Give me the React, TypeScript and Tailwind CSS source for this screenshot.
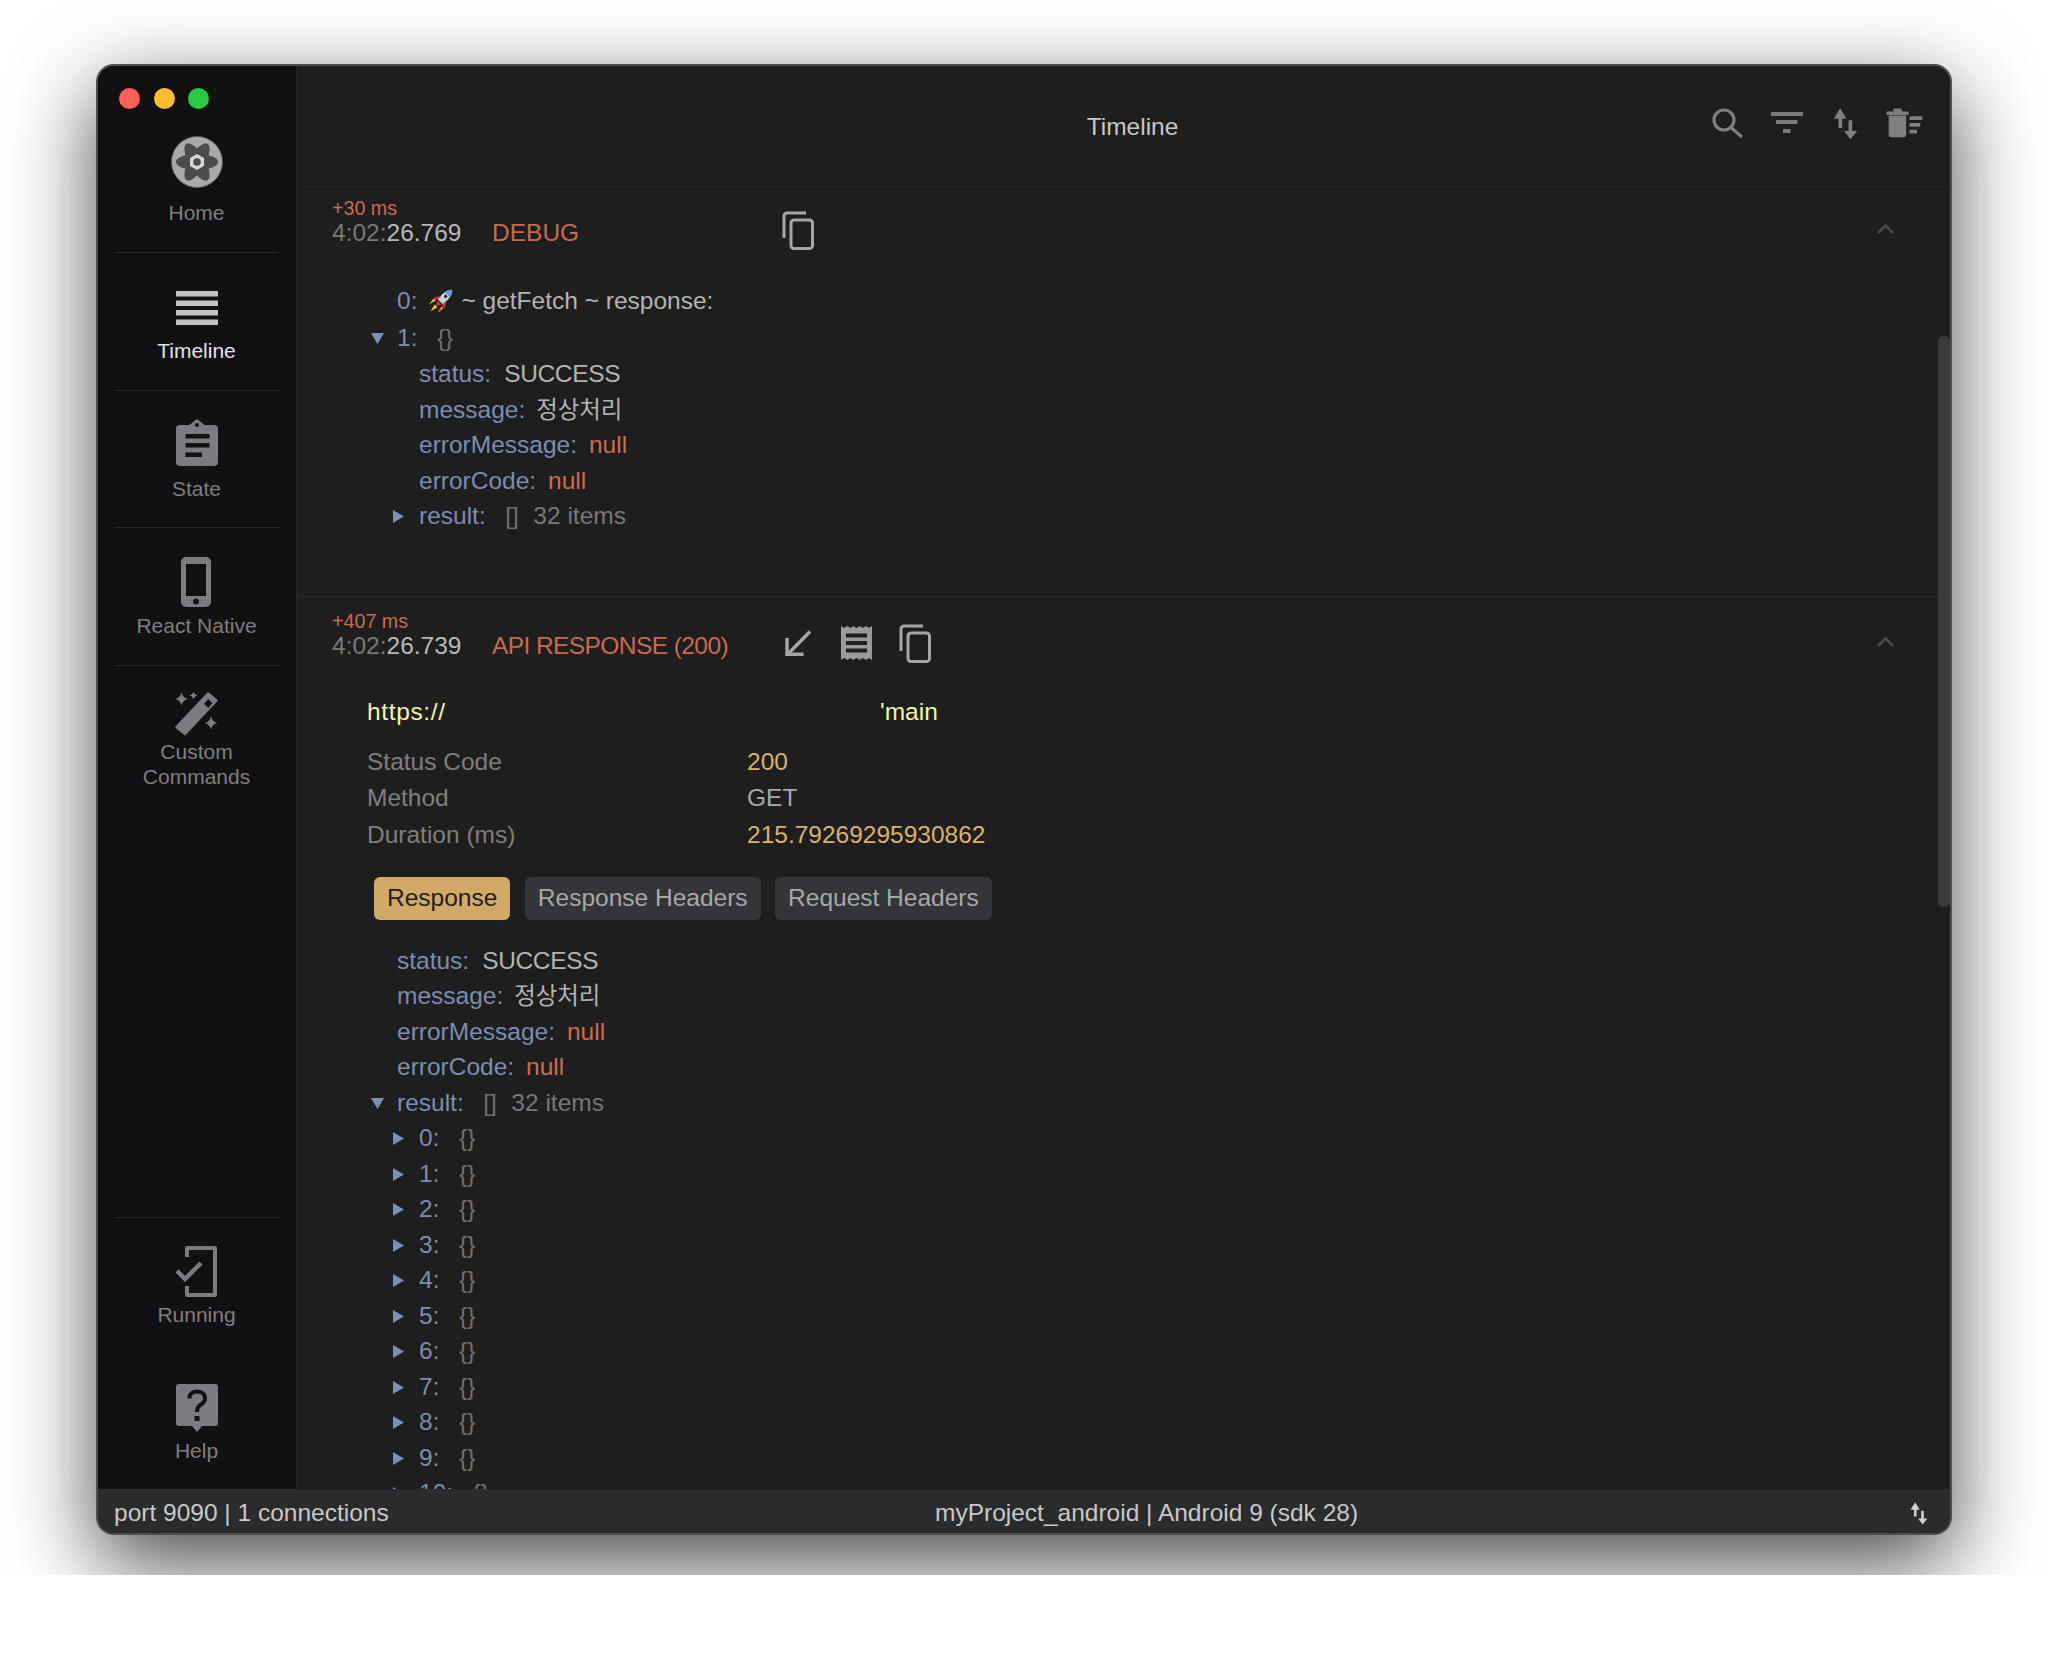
import React from "react";

const Tri = ({ open }: { open?: boolean }) =>
  open ? (
    <svg width="13" height="11" viewBox="0 0 13 11" className="block"><polygon points="0,0 13,0 6.5,11" fill="#7a8fb5" /></svg>
  ) : (
    <svg width="11" height="13" viewBox="0 0 11 13" className="block"><polygon points="0,0 11,6.5 0,13" fill="#7a8fb5" /></svg>
  );

const Key = ({ children }: { children: React.ReactNode }) => <span className="text-[#7b8db0]">{children}</span>;
const Val = ({ children }: { children: React.ReactNode }) => <span className="ml-[13px] tracking-[-0.35px] text-[#b3b3b3]">{children}</span>;
const Kor = ({ children }: { children: React.ReactNode }) => <span className="ml-[11px] text-[23.4px] text-[#b3b3b3]">{children}</span>;
const Nul = () => <span className="ml-[12px] text-[#d06b4d]">null</span>;
const Brace = ({ children }: { children: React.ReactNode }) => <span className="ml-[19.5px] text-[#6f6f6f]">{children}</span>;

const Row = ({ pl, tri, h, children }: { pl: string; tri?: "open" | "closed"; h?: string; children: React.ReactNode }) => (
  <div className={`flex items-center whitespace-nowrap ${pl} ${h ?? "h-[35.5px]"}`}>
    <div className="flex w-[26px] shrink-0 items-center">{tri ? <Tri open={tri === "open"} /> : null}</div>
    {children}
  </div>
);

const Copy = () => (
  <svg width="32" height="39" viewBox="0 0 32 39" fill="none" stroke="#a6a6a6" strokeWidth="3">
    <path d="M2 27V5a3 3 0 0 1 3-3h19" />
    <rect x="9" y="9" width="21.5" height="28.5" rx="3" />
  </svg>
);

const ArrowIn = () => (
  <svg width="26" height="26" viewBox="0 0 26 26" fill="none" stroke="#a6a6a6" strokeWidth="3.4">
    <path d="M25 1.5L3 24" />
    <path d="M2 8v16.2h16.5" />
  </svg>
);

const Receipt = () => (
  <svg width="31" height="34" viewBox="0 0 31 34">
    <polygon
      fill="#9a9a9a"
      points="0,0 3.1,2 6.2,0 9.3,2 12.4,0 15.5,2 18.6,0 21.7,2 24.8,0 27.9,2 31,0 31,34 27.9,32 24.8,34 21.7,32 18.6,34 15.5,32 12.4,34 9.3,32 6.2,34 3.1,32 0,34"
    />
    <rect x="5" y="7.5" width="21" height="4" fill="#1e1e1e" />
    <rect x="5" y="15" width="21" height="4" fill="#1e1e1e" />
    <rect x="5" y="22.5" width="21" height="4" fill="#1e1e1e" />
  </svg>
);

const Chevron = () => (
  <svg width="17" height="10" viewBox="0 0 17 10" fill="none" stroke="#4a4a4a" strokeWidth="2.6" className="mr-[56px] ml-auto -mt-[9px] shrink-0">
    <path d="M1 9l7.5-7.5L16 9" />
  </svg>
);

const Swap = ({ color, w, h }: { color: string; w: number; h: number }) => (
  <svg width={w} height={h} viewBox="700 203 74 96" fill={color}>
    <polygon points="721,204 702,235 716,235 716,263 727,263 727,235 740,235" />
    <polygon points="752,297 733,272 746,272 746,240 757,240 757,272 772,272" />
  </svg>
);

const Rocket = () => (
  <svg width="25" height="24" viewBox="0 0 25 24" className="ml-[12px] shrink-0">
    <g transform="rotate(45 12 12)">
      <path d="M12 -4 C16 0 16.5 6 15.5 13 H8.5 C7.5 6 8 0 12 -4Z" fill="#c9d3de" />
      <path d="M12 -4 C14.5 -1.5 15.6 1 15.9 4 H8.1 C8.4 1 9.5 -1.5 12 -4Z" fill="#5a9fd8" />
      <circle cx="12" cy="5.5" r="2.3" fill="#3a2c3a" stroke="#e8eef2" strokeWidth="0.9" />
      <path d="M8.5 8 L4 15 L8.5 14Z" fill="#d8322c" />
      <path d="M15.5 8 L20 15 L15.5 14Z" fill="#d8322c" />
      <path d="M9 14 L15 14 L12 19Z" fill="#d8322c" />
      <path d="M5 15.5 L8 15 L6 23Z" fill="#f7c623" />
      <path d="M16 15 L19 15.5 L18 23Z" fill="#f7821f" />
      <path d="M10 19 L14 19 L12 27Z" fill="#f7c623" />
    </g>
  </svg>
);

const Logo = () => (
  <svg width="52" height="52" viewBox="0 0 52 52">
    <circle cx="26" cy="26" r="25.5" fill="#a9a9a9" stroke="#5e5e5e" strokeWidth="1" />
    <g fill="#4c4c4e">
      <ellipse cx="26" cy="26" rx="21" ry="8" />
      <ellipse cx="26" cy="26" rx="21" ry="8" transform="rotate(60 26 26)" />
      <ellipse cx="26" cy="26" rx="21" ry="8" transform="rotate(120 26 26)" />
    </g>
    <polygon points="26,18 33,22 33,30 26,34 19,30 19,22" fill="#d6d6d6" />
    <circle cx="26" cy="26" r="3.8" fill="#4c4c4e" />
  </svg>
);

const TimelineIcon = () => (
  <svg width="42" height="34" viewBox="0 0 42 34" fill="#c4c4c4">
    <rect y="0" width="42" height="5.5" />
    <rect y="9.5" width="42" height="5.5" />
    <rect y="19" width="42" height="5.5" />
    <rect y="28.5" width="42" height="5.5" />
  </svg>
);

const StateIcon = () => (
  <svg width="42" height="47" viewBox="0 0 42 47">
    <rect x="0" y="6" width="42" height="41" rx="4" fill="#7d7b80" />
    <polygon points="12,7 21,0 30,7" fill="#7d7b80" />
    <circle cx="21" cy="6" r="2" fill="#111113" />
    <rect x="9.5" y="15" width="24" height="4.5" fill="#111113" />
    <rect x="9.5" y="24" width="24" height="4.5" fill="#111113" />
    <rect x="9.5" y="33.5" width="16.5" height="4.5" fill="#111113" />
  </svg>
);

const PhoneIcon = () => (
  <svg width="30" height="50" viewBox="0 0 30 50">
    <rect width="30" height="50" rx="5" fill="#7d7b80" />
    <rect x="5" y="7" width="20" height="32" fill="#111113" />
    <circle cx="15" cy="44.5" r="3" fill="#111113" />
  </svg>
);

const star = (x: number, y: number, r: number) => {
  const k = r * 0.18;
  return `M${x} ${y - r}Q${x + k} ${y - k} ${x + r} ${y}Q${x + k} ${y + k} ${x} ${y + r}Q${x - k} ${y + k} ${x - r} ${y}Q${x - k} ${y - k} ${x} ${y - r}Z`;
};

const WandIcon = () => (
  <svg width="43" height="44" viewBox="0 0 43 44" fill="#7d7b80">
    <polygon points="33,1.5 41.5,8.5 10,42 1.5,35" stroke="#7d7b80" strokeWidth="2.4" strokeLinejoin="round" />
    <polygon points="29,12 33,7 37.5,11 33.5,16" fill="#111113" />
    <path d={star(6.5, 7, 6.5)} />
    <path d={star(18.5, 3.5, 3.8)} />
    <path d={star(36, 31, 6.5)} />
  </svg>
);

const RunningIcon = () => (
  <svg width="41" height="51" viewBox="0 0 41 51" fill="none" stroke="#7d7b80" strokeWidth="4">
    <path d="M11 11V2h28v47H11v-9" strokeLinejoin="round" />
    <path d="M1 25l8 8 16-16" strokeWidth="4.4" />
  </svg>
);

const HelpIcon = () => (
  <svg width="42" height="48" viewBox="0 0 42 48">
    <path d="M3 0h36a3 3 0 0 1 3 3v36a3 3 0 0 1-3 3H26l-5 6-5-6H3a3 3 0 0 1-3-3V3a3 3 0 0 1 3-3z" fill="#7d7b80" />
    <path d="M13.500 14.500C13.500 9.500 17 7.500 21 7.500s8 2 8 7c0 4.500-4 5.500-6 7.500-1.500 1.500-2 3-2 6" fill="none" stroke="#111113" strokeWidth="4" />
    <rect x="18.500" y="32" width="5" height="5" fill="#111113" />
  </svg>
);

const Divider = () => <div className="h-px w-[164px] shrink-0 self-center bg-[#2c2c2e]" />;

const Nav = ({
  icon,
  label,
  cls,
  iconCls,
  labelCls,
}: {
  icon: React.ReactNode;
  label: React.ReactNode;
  cls: string;
  iconCls: string;
  labelCls?: string;
}) => (
  <div className={`flex shrink-0 flex-col items-center ${cls}`}>
    <div className={`flex h-[52px] items-center justify-center ${iconCls}`}>{icon}</div>
    <div className={`text-center text-[21px] leading-[25px] ${labelCls ?? "text-[#7f7f7f]"}`}>{label}</div>
  </div>
);

const Sidebar = () => (
  <div className="flex w-[199px] shrink-0 flex-col border-r border-[#262628] bg-[#111113] pr-[1px]">
    <div className="flex h-[186px] shrink-0 flex-col items-center">
      <div className="flex gap-[13.5px] self-start pt-[22px] pl-[21px]">
        <div className="h-[21px] w-[21px] rounded-full bg-[#ff5f57]" />
        <div className="h-[21px] w-[21px] rounded-full bg-[#febc2e]" />
        <div className="h-[21px] w-[21px] rounded-full bg-[#28c840]" />
      </div>
      <div className="mt-[26.5px] mb-[12px] flex h-[52px] items-center justify-center"><Logo /></div>
      <div className="text-[21px] leading-[25px] text-[#7f7f7f]">Home</div>
    </div>
    <Divider />
    <Nav icon={<TimelineIcon />} label="Timeline" cls="h-[136.5px] pt-[29px]" iconCls="mb-[3.5px]" labelCls="text-[#e2e2e2]" />
    <Divider />
    <Nav icon={<StateIcon />} label="State" cls="h-[136.5px] pt-[26px]" iconCls="mb-[7px]" />
    <Divider />
    <Nav icon={<PhoneIcon />} label="React Native" cls="h-[136.5px] pt-[28px]" iconCls="mb-[5px] pr-[2px]" />
    <Divider />
    <Nav icon={<WandIcon />} label={<>Custom<br />Commands</>} cls="pt-[22.5px]" iconCls="-mb-[1.5px]" />
    <div className="flex-1" />
    <Divider />
    <Nav icon={<RunningIcon />} label="Running" cls="pt-[28px]" iconCls="mb-[4.5px]" />
    <Nav icon={<HelpIcon />} label="Help" cls="pt-[54.5px] pb-[26px]" iconCls="mb-[4.5px]" />
  </div>
);

const Header = () => (
  <div className="flex h-[121px] shrink-0 items-center border-b border-[#262626]">
    <div className="flex-1 pt-[2px] pl-[270px] text-center text-[24.5px] text-[#c8c8c8]">Timeline</div>
    <div className="flex pr-[16px] pb-[5px]">
      <div className="flex w-[59px] justify-center">
        <svg width="31" height="30" viewBox="0 0 31 30" fill="none" stroke="#7f7f7f" strokeWidth="3.2">
          <circle cx="12" cy="12" r="10" />
          <path d="M19 19.500L30 29" />
        </svg>
      </div>
      <div className="flex w-[59px] justify-center">
        <svg width="32" height="30" viewBox="0 0 32 30" fill="#7a7a7a">
          <rect x="0" y="4" width="32" height="4" />
          <rect x="5" y="12" width="21.500" height="4" />
          <rect x="12" y="21" width="7.500" height="4" />
        </svg>
      </div>
      <div className="flex w-[59px] justify-center"><Swap color="#7f7f7f" w={25} h={32} /></div>
      <div className="flex w-[59px] justify-center">
        <svg width="37" height="30" viewBox="858 206 110 88" fill="#7f7f7f">
          <path d="M866 228h52v56a8 8 0 0 1-8 8h-36a8 8 0 0 1-8-8z" />
          <path d="M860 216h20v-6a3 3 0 0 1 3-3h19a3 3 0 0 1 3 3v6h20v10h-65z" />
          <rect x="928" y="230" width="38" height="11" />
          <rect x="928" y="250" width="32" height="11" />
          <rect x="928" y="270" width="22" height="11" />
        </svg>
      </div>
    </div>
  </div>
);

const EntryHead = ({
  ms,
  time,
  type,
  typeCls,
  icons,
  pt,
}: {
  ms: string;
  time: string;
  type: string;
  typeCls?: string;
  icons: React.ReactNode;
  pt: string;
}) => (
  <div className={`flex flex-col pl-[35px] ${pt}`}>
    <div className="h-[20px] text-[19.7px] leading-[20px] whitespace-nowrap text-[#c96a4f]">{ms}</div>
    <div className="mt-[1px] flex h-[28px] items-center text-[24.5px] whitespace-nowrap">
      <div className="w-[160px] shrink-0">
        <span className="text-[#7a7a7a]">4:02:</span>
        <span className="text-[#b8b8b8]">{time}</span>
      </div>
      <div className={`w-[277px] shrink-0 text-[#c96a4f] ${typeCls ?? ""}`}>{type}</div>
      {icons}
      <Chevron />
    </div>
  </div>
);

const IconBox = ({ children }: { children: React.ReactNode }) => (
  <div className="flex h-[28px] w-[58.5px] shrink-0 -translate-y-[3px] items-center justify-center">{children}</div>
);

const Entry1 = () => (
  <div className="h-[410px] shrink-0 border-b border-[#2d2d2d]">
    <EntryHead ms="+30 ms" time="26.769" type="DEBUG" pt="pt-[11px]" icons={<IconBox><Copy /></IconBox>} />
    <div className="mt-[35px] text-[24.5px]">
      <Row pl="pl-[74px]" h="h-[38px]">
        <Key>0:</Key>
        <Rocket />
        <span className="ml-[7px] text-[#b3b3b3]">~ getFetch ~ response:</span>
      </Row>
      <Row pl="pl-[74px]" tri="open" h="h-[37px]">
        <Key>1:</Key>
        <Brace>{"{}"}</Brace>
      </Row>
      <Row pl="pl-[96px]"><Key>status:</Key><Val>SUCCESS</Val></Row>
      <Row pl="pl-[96px]"><Key>message:</Key><Kor>정상처리</Kor></Row>
      <Row pl="pl-[96px]"><Key>errorMessage:</Key><Nul /></Row>
      <Row pl="pl-[96px]"><Key>errorCode:</Key><Nul /></Row>
      <Row pl="pl-[96px]" tri="closed">
        <Key>result:</Key>
        <Brace>[]</Brace>
        <span className="ml-[14.5px] text-[#777777]">32 items</span>
      </Row>
    </div>
  </div>
);

const Info = ({ label, value, color }: { label: string; value: string; color: string }) => (
  <div className="flex h-[36.5px] items-center whitespace-nowrap">
    <div className="w-[380px] shrink-0 text-[#7e7e7e]">{label}</div>
    <div className={color}>{value}</div>
  </div>
);

const Tab = ({ label, active }: { label: string; active?: boolean }) => (
  <div
    className={`flex h-[43px] items-center rounded-[6px] px-[13px] whitespace-nowrap ${
      active ? "bg-[#d2aa68] text-[#1e1e1e]" : "bg-[#333538] text-[#a8a8a8]"
    }`}
  >
    {label}
  </div>
);

const Entry2 = () => (
  <div className="shrink-0">
    <EntryHead
      ms="+407 ms"
      time="26.739"
      type="API RESPONSE (200)"
      typeCls="tracking-[-0.58px]"
      pt="pt-[14px]"
      icons={
        <>
          <IconBox><ArrowIn /></IconBox>
          <IconBox><Receipt /></IconBox>
          <IconBox><Copy /></IconBox>
        </>
      }
    />
    <div className="mt-[34px] pl-[70px] text-[24.5px]">
      <div className="flex h-[36px] items-center whitespace-nowrap text-[#f5f5a0]">
        <span className="w-[513px] shrink-0 tracking-[0.65px]">https://</span>
        <span>'main</span>
      </div>
      <div className="mt-[14px]">
        <Info label="Status Code" value="200" color="text-[#d9b26a]" />
        <Info label="Method" value="GET" color="text-[#a9a9a9]" />
        <Info label="Duration (ms)" value="215.79269295930862" color="text-[#d9b26a]" />
      </div>
      <div className="mt-[23.5px] ml-[7px] flex gap-[14.5px]">
        <Tab label="Response" active />
        <Tab label="Response Headers" />
        <Tab label="Request Headers" />
      </div>
    </div>
    <div className="mt-[23.5px] text-[24.5px]">
      <Row pl="pl-[74px]"><Key>status:</Key><Val>SUCCESS</Val></Row>
      <Row pl="pl-[74px]"><Key>message:</Key><Kor>정상처리</Kor></Row>
      <Row pl="pl-[74px]"><Key>errorMessage:</Key><Nul /></Row>
      <Row pl="pl-[74px]"><Key>errorCode:</Key><Nul /></Row>
      <Row pl="pl-[74px]" tri="open">
        <Key>result:</Key>
        <Brace>[]</Brace>
        <span className="ml-[14.5px] text-[#777777]">32 items</span>
      </Row>
      {["0", "1", "2", "3", "4", "5", "6", "7", "8", "9", "10"].map((n) => (
        <Row key={n} pl="pl-[96px]" tri="closed">
          <Key>{n}:</Key>
          <Brace>{"{}"}</Brace>
        </Row>
      ))}
    </div>
  </div>
);

export default function App() {
  return (
    <div className="h-[1662px] bg-white font-['Liberation_Sans','Noto_Sans_CJK_KR',sans-serif]">
      <div className="h-[1575px] overflow-hidden pt-[64px] pl-[96px]">
        <div className="flex h-[1471px] w-[1856px] flex-col overflow-hidden rounded-[18px] border-2 border-[#4e4e4e] bg-[#1e1e1e] shadow-[0_28px_85px_rgba(0,0,0,0.72)]">
          <div className="flex min-h-0 flex-1">
            <Sidebar />
            <div className="flex min-w-0 flex-1 flex-col">
              <Header />
              <div className="relative min-h-0 flex-1 overflow-hidden">
                <Entry1 />
                <Entry2 />
                <div className="absolute top-[149px] right-0 h-[571px] w-[12px] rounded-[5px] bg-[#3a3a3a]" />
              </div>
            </div>
          </div>
          <div className="flex h-[44px] shrink-0 items-center bg-[#2a2b2d] pt-[5px] text-[24.5px] whitespace-nowrap text-[#c8c8c8]">
            <div className="w-[837px] shrink-0 pl-[16px]">port 9090 | 1 connections</div>
            <div>myProject_android | Android 9 (sdk 28)</div>
            <div className="mr-[22px] ml-auto flex"><Swap color="#cfcfcf" w={18} h={23} /></div>
          </div>
        </div>
      </div>
    </div>
  );
}
